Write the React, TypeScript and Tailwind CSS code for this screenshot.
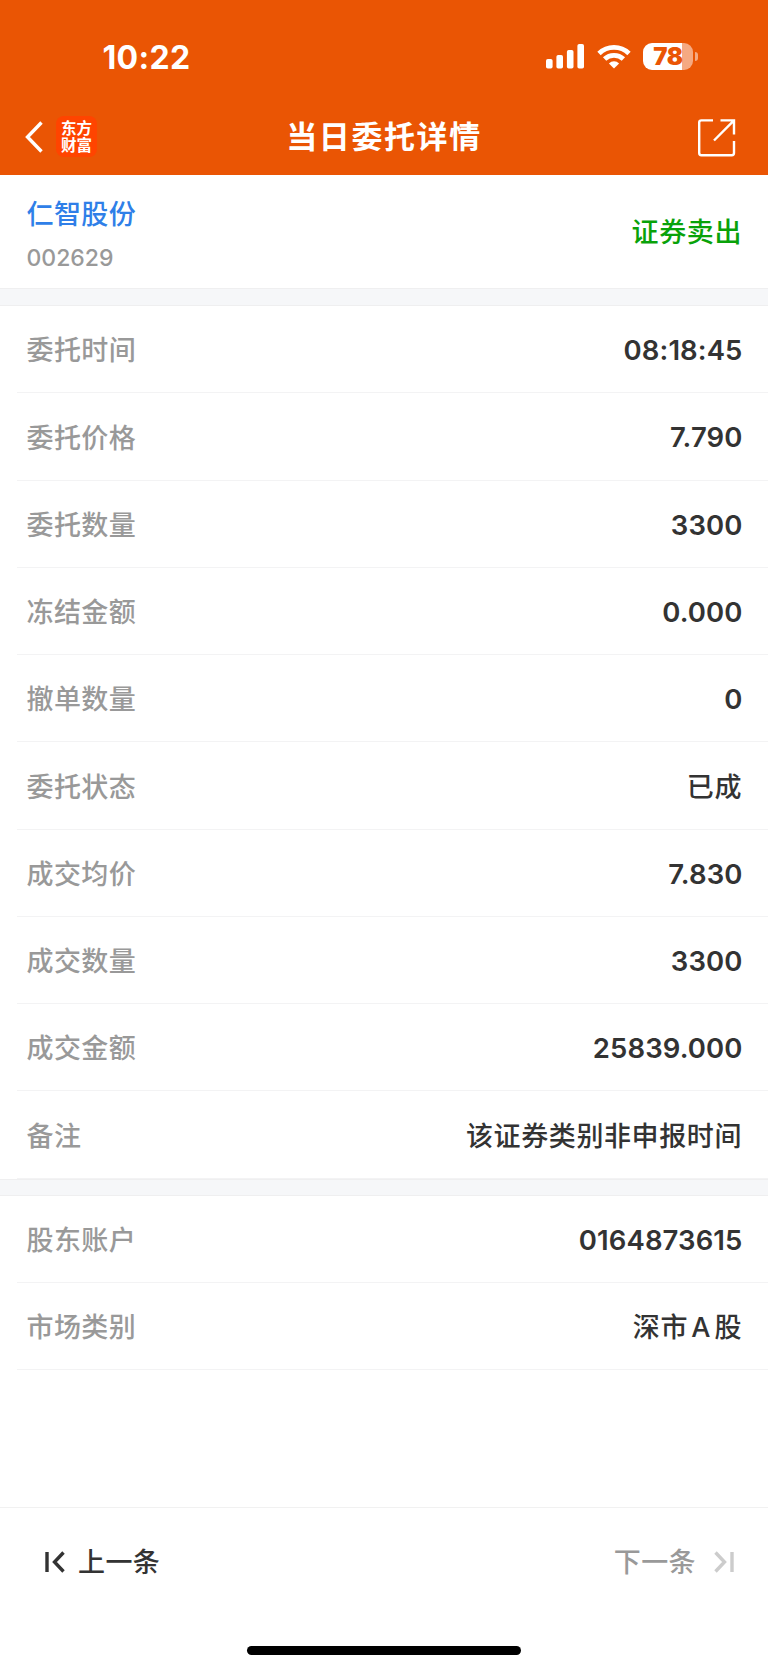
import React from 'react';

interface DetailItem {
  label: string;
  value: string;
  numeric?: boolean;
}

const orderItems: DetailItem[] = [
  { label: '委托时间', value: '08:18:45', numeric: true },
  { label: '委托价格', value: '7.790', numeric: true },
  { label: '委托数量', value: '3300', numeric: true },
  { label: '冻结金额', value: '0.000', numeric: true },
  { label: '撤单数量', value: '0', numeric: true },
  { label: '委托状态', value: '已成' },
  { label: '成交均价', value: '7.830', numeric: true },
  { label: '成交数量', value: '3300', numeric: true },
  { label: '成交金额', value: '25839.000', numeric: true },
  { label: '备注', value: '该证券类别非申报时间' },
];

const accountItems: DetailItem[] = [
  { label: '股东账户', value: '0164873615', numeric: true },
  { label: '市场类别', value: '深市 A 股' },
];

const StatusBar: React.FC = () => (
  <div className="flex h-[113px] items-center justify-between pl-[102.5px] pr-[70px]">
    <span className="pt-[2px] text-[32px] leading-none font-bold tracking-[0.3px]">10:22</span>
    <div className="flex items-center">
      <svg width="39" height="26" viewBox="0 0 39 26" fill="currentColor">
        <rect x="0" y="15" width="6.6" height="9.5" rx="1.8" />
        <rect x="10.4" y="11" width="6.6" height="13.5" rx="1.8" />
        <rect x="20.9" y="6" width="6.6" height="18.5" rx="1.8" />
        <rect x="31.4" y="0" width="6.6" height="24.5" rx="1.8" />
      </svg>
      <svg className="ml-3" width="34" height="26" viewBox="0 0 34 26" fill="none" stroke="currentColor" strokeWidth="4.8">
        <path d="M2 9.4A21.6 21.6 0 0 1 32 9.4" />
        <path d="M7.6 15.1A13.6 13.6 0 0 1 26.4 15.1" />
        <path d="M17 24.6L11.9 19.4A7.4 7.4 0 0 1 22.1 19.4Z" fill="currentColor" stroke="none" />
      </svg>
      <div className="ml-3 flex h-[27px] w-[50px] items-center justify-center rounded-[9px] bg-[linear-gradient(to_right,white_78%,#f5a982_78%)]">
        <span className="text-[24px] leading-none font-black tracking-[-0.3px] text-[#ea5504]">78</span>
      </div>
      <div className="ml-[2px] h-[9px] w-[3px] rounded-r-full bg-[#f5a982]" />
    </div>
  </div>
);

const NavBar: React.FC = () => (
  <div className="grid h-[62px] grid-cols-3 items-start">
    <div className="flex items-center pt-[3px] pl-[25px]">
      <svg width="18" height="32" viewBox="0 0 18 32" fill="none" stroke="currentColor" strokeWidth="3.4">
        <path d="M16.5 1.5L2.5 16L16.5 30.5" />
      </svg>
      <div className="ml-[13px] flex h-[41px] w-[41px] flex-col items-center justify-center rounded-[8px] bg-[#ff4400] text-[15.5px] leading-[17px] font-bold">
        <span>东方</span>
        <span>财富</span>
      </div>
    </div>
    <h1 className="pt-[2px] text-center text-[31px] leading-[44px] font-bold tracking-[1.6px] whitespace-nowrap">当日委托详情</h1>
    <svg className="mt-[5px] mr-[32px] justify-self-end" width="39" height="40" viewBox="0 0 39 40" fill="none" stroke="currentColor" strokeWidth="2.4">
      <path d="M16 2.4H4.4Q2.2 2.4 2.2 4.6V35Q2.2 37.2 4.4 37.2H34.8Q37 37.2 37 35V23" />
      <path d="M23.5 2.4H37V16.5M36.5 2.8L17 22.5" />
    </svg>
  </div>
);

const DetailRow: React.FC<{ item: DetailItem }> = ({ item }) => (
  <div className="ml-[17px] flex h-[87.25px] items-center justify-between border-b border-[#f3f3f4] pt-[3px] pr-[26px] pl-[9.5px]">
    <span className="pt-[2px] text-[27px] font-medium tracking-[0.4px] text-[#999999]">{item.label}</span>
    {item.numeric ? (
      <span className="-mr-[0.5px] text-[27.5px] font-semibold tracking-[0.1px] text-[#333333]">{item.value}</span>
    ) : (
      <span className="pt-[2px] text-[27px] font-medium tracking-[0.6px] text-[#333333] [word-spacing:-4.5px]">{item.value}</span>
    )}
  </div>
);

const App: React.FC = () => {
  return (
    <div className="flex h-[1669px] w-[768px] flex-col bg-white font-[Inter,'Noto_Sans_CJK_SC',sans-serif]">
      <header className="h-[175px] shrink-0 bg-[#ea5504] text-white">
        <StatusBar />
        <NavBar />
      </header>

      <section className="flex h-[113px] shrink-0 items-center justify-between pr-[26px] pl-[26.5px]">
        <div className="pt-[6px]">
          <p className="text-[27px] leading-[40px] font-medium tracking-[0.4px] text-[#2f7fe8]">仁智股份</p>
          <p className="mt-[7px] text-[23px] leading-[32px] font-medium text-[#999999]">002629</p>
        </div>
        <span className="pt-[4px] text-[27px] font-medium tracking-[0.6px] text-[#09a209]">证券卖出</span>
      </section>

      <div className="h-[18px] shrink-0 border-y border-[#efeff0] bg-[#f6f7f9]" />
      <section>
        {orderItems.map((item) => (
          <DetailRow key={item.label} item={item} />
        ))}
      </section>
      <div className="h-[17px] shrink-0 border-y border-[#efeff0] bg-[#f6f7f9]" />
      <section>
        {accountItems.map((item) => (
          <DetailRow key={item.label} item={item} />
        ))}
      </section>

      <footer className="mt-auto flex h-[162px] shrink-0 flex-col border-t border-[#f1f1f1]">
        <div className="flex h-[107px] items-center justify-between pr-[34px] pl-[45px] text-[27px] tracking-[0.4px]">
          <button className="flex items-center font-medium text-[#333333]">
            <svg width="21" height="22" viewBox="0 0 21 22" fill="none" stroke="currentColor" strokeWidth="3.4">
              <path d="M2 1V21M18.5 1.5L9.5 11L18.5 20.5" />
            </svg>
            <span className="ml-[12px] pt-[3px]">上一条</span>
          </button>
          <button className="flex items-center font-medium text-[#999999]">
            <span className="pt-[3px]">下一条</span>
            <svg className="ml-[17px] text-[#cccccc]" width="21" height="22" viewBox="0 0 21 22" fill="none" stroke="currentColor" strokeWidth="3.4">
              <path d="M19 1V21M2.5 1.5L11.5 11L2.5 20.5" />
            </svg>
          </button>
        </div>
        <div className="mx-auto mt-[31px] h-[9px] w-[274px] rounded-full bg-black" />
      </footer>
    </div>
  );
};

export default App;
